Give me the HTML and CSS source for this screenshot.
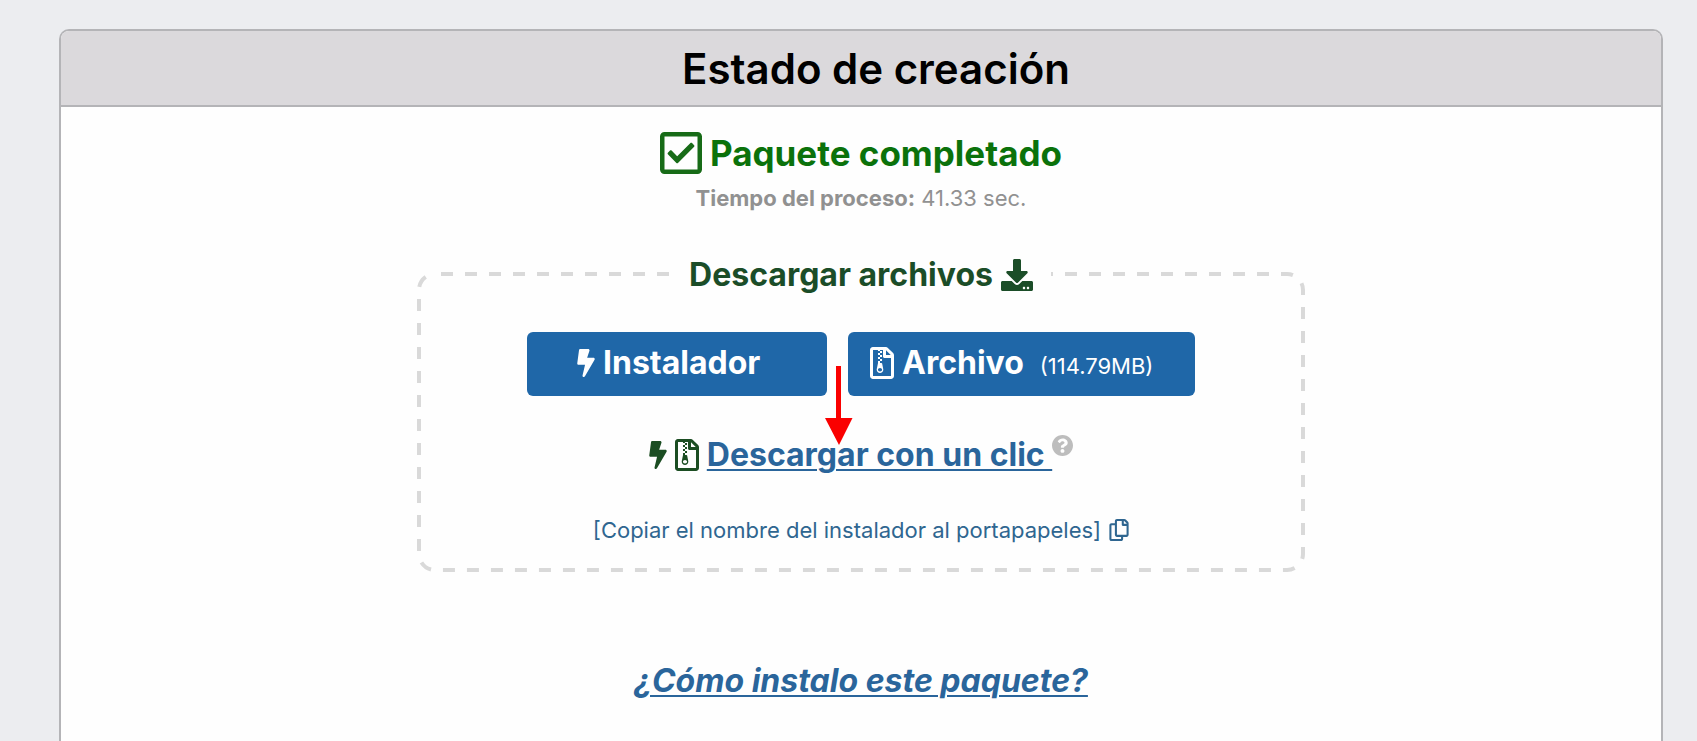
FILE: index.html
```html
<!DOCTYPE html>
<html lang="es">
<head>
<meta charset="utf-8">
<title>Estado de creación</title>
<link rel="stylesheet" href="styles.css">
</head>
<body>
<svg class="sprite" aria-hidden="true">
  <symbol id="bolt" viewBox="0 0 320 512"><path d="M296 160H180.600l42.600-129.800C227.200 15 215.700 0 200 0H56C44 0 33.800 8.900 32.200 20.800l-32 240C-1.700 275.200 9.500 288 24 288h118.700L96.600 482.500c-3.600 15.200 8 29.500 23.300 29.500 8.400 0 16.400-4.400 20.800-12l176-304c9.300-15.900-2.200-36-20.700-36z"/></symbol>
  <symbol id="zip" viewBox="0 0 384 512"><path d="M128.300 160v32h32v-32zm64-96h-32v32h32zm-64 32v32h32V96zm64 32h-32v32h32zm177.600-30.100L286 14C277 5 264.800-.1 252.100-.1H48C21.500 0 0 21.500 0 48v416c0 26.500 21.500 48 48 48h288c26.500 0 48-21.500 48-48V131.900c0-12.700-5.100-25-14.100-34zM256 51.900l76.100 76.100H256zM336 464H48V48h79.700v16h32V48H208v104c0 13.300 10.700 24 24 24h104zM194.200 265.700c-1.100-5.600-6-9.700-11.800-9.700h-22.100v-32h-32v32l-19.700 97.100C102 385.600 126.800 416 160 416c33.100 0 57.900-30.200 51.500-62.600zm-33.900 124.400c-17.900 0-32.400-12.100-32.400-27s14.500-27 32.400-27 32.400 12.100 32.400 27-14.500 27-32.400 27zm32-198.100h-32v32h32z"/></symbol>
</svg>
<main class="panel">
  <header class="panel-head"><h1 class="title">Estado de creación</h1></header>
  <div class="panel-body">
    <h2 class="done">
      <svg class="icon-check" viewBox="0 32 448 448" aria-hidden="true"><path d="M400 32H48C21.490 32 0 53.490 0 80v352c0 26.510 21.490 48 48 48h352c26.510 0 48-21.490 48-48V80c0-26.510-21.490-48-48-48zm0 400H48V80h352v352zm-35.864-241.724L191.547 361.480c-4.705 4.667-12.303 4.637-16.970-.068l-90.781-91.516c-4.667-4.705-4.637-12.303.069-16.971l22.719-22.536c4.705-4.667 12.303-4.637 16.970.069l59.792 60.277 141.352-140.216c4.705-4.667 12.303-4.637 16.970.068l22.536 22.718c4.667 4.706 4.637 12.304-.068 16.971z"/></svg>
      Paquete completado
    </h2>
    <p class="time"><strong>Tiempo del proceso:</strong> 41.33 sec.</p>

    <section class="downloads">
      <svg class="outline" aria-hidden="true"><rect class="outline-rect" rx="16"/></svg>
      <h3 class="legend">
        Descargar archivos
        <svg class="icon-download" viewBox="0 0 512 512" aria-hidden="true"><path d="M216 0h80c13.300 0 24 10.700 24 24v168h87.700c17.800 0 26.700 21.500 14.100 34.100L269.700 378.300c-7.500 7.500-19.800 7.500-27.300 0L90.100 226.100c-12.600-12.600-3.700-34.100 14.100-34.100H192V24c0-13.300 10.700-24 24-24zm296 376v112c0 13.300-10.700 24-24 24H24c-13.300 0-24-10.700-24-24V376c0-13.300 10.700-24 24-24h146.700l49 49c20.100 20.100 52.500 20.100 72.600 0l49-49H488c13.300 0 24 10.700 24 24zm-124 88c0-11-9-20-20-20s-20 9-20 20 9 20 20 20 20-9 20-20zm64 0c0-11-9-20-20-20s-20 9-20 20 9 20 20 20 20-9 20-20z"/></svg>
      </h3>
      <div class="buttons">
        <button type="button" class="btn btn-installer"><svg class="icon-bolt" aria-hidden="true"><use href="#bolt"/></svg>Instalador</button>
        <button type="button" class="btn btn-archive"><svg class="icon-zip" aria-hidden="true"><use href="#zip"/></svg>Archivo<span class="size">(114.79MB)</span></button>
      </div>
      <div class="one-click">
        <svg class="icon-bolt" aria-hidden="true"><use href="#bolt"/></svg>
        <svg class="icon-zip" aria-hidden="true"><use href="#zip"/></svg>
        <a class="one-click-link" href="#descargar">Descargar con un clic </a>
        <svg class="icon-help" viewBox="8 8 496 496" role="img" aria-label="Ayuda"><path d="M504 256c0 136.997-111.043 248-248 248S8 392.997 8 256C8 119.083 119.043 8 256 8s248 111.083 248 248zM262.655 90c-54.497 0-89.255 22.957-116.549 63.758-3.536 5.286-2.353 12.415 2.715 16.258l34.699 26.310c5.205 3.947 12.621 3.008 16.665-2.122 17.864-22.658 30.113-35.797 57.303-35.797 20.429 0 45.698 13.148 45.698 32.958 0 14.976-12.363 22.667-32.534 33.976C247.128 238.528 216 254.941 216 296v4c0 6.627 5.373 12 12 12h56c6.627 0 12-5.373 12-12v-1.333c0-28.462 83.186-29.647 83.186-106.667 0-58.002-60.165-102-116.531-102zM256 338c-25.365 0-46 20.635-46 46 0 25.364 20.635 46 46 46s46-20.636 46-46c0-25.365-20.635-46-46-46z"/></svg>
      </div>
      <a class="copy" href="#copiar">[Copiar el nombre del instalador al portapapeles]
        <svg class="icon-copy" viewBox="0 0 448 512" aria-hidden="true"><path d="M433.941 65.941l-51.882-51.882A48 48 0 0 0 348.118 0H176c-26.510 0-48 21.490-48 48v48H48c-26.510 0-48 21.490-48 48v320c0 26.510 21.490 48 48 48h224c26.510 0 48-21.490 48-48v-48h80c26.510 0 48-21.490 48-48V99.882a48 48 0 0 0-14.059-33.941zM266 464H54a6 6 0 0 1-6-6V150a6 6 0 0 1 6-6h74v224c0 26.510 21.490 48 48 48h96v42a6 6 0 0 1-6 6zm128-96H182a6 6 0 0 1-6-6V54a6 6 0 0 1 6-6h106v88c0 13.255 10.745 24 24 24h88v202a6 6 0 0 1-6 6zm6-256h-64V48h9.632c1.591 0 3.117.632 4.243 1.757l48.368 48.368a6 6 0 0 1 1.757 4.243V112z"/></svg></a>
      <svg class="arrow" viewBox="0 0 28 80" aria-hidden="true"><path d="M11 0h5v52h11.500L14 79 0 52h11z"/></svg>
    </section>

    <a class="howto" href="#instalar">¿Cómo instalo este paquete?</a>
  </div>
</main>
</body>
</html>
```

FILE: styles.css
```css
* { box-sizing: border-box; }

body {
  margin: 0;
  min-height: 100vh;
  display: flex;
  flex-direction: column;
  padding: 29px 34px 0 59px;
  background: #ecedf0;
  font-family: Inter, "Liberation Sans", sans-serif;
  font-size: 22px;
}

h1, h2, h3, p { margin: 0; }
svg { fill: currentColor; flex: none; }
.sprite { position: absolute; width: 0; height: 0; }

.panel {
  flex: 1;
  display: flex;
  flex-direction: column;
  border: 2px solid #b4b4b7;
  border-bottom: 0;
  border-radius: 10px 10px 0 0;
  background: #fefefe;
  overflow: hidden;
}

.panel-head {
  padding: 12px 0 10px 30px;
  border-bottom: 2px solid #b4b4b7;
  background: #dbd9dc;
  text-align: center;
}

.title {
  font-size: 42px;
  font-weight: 600;
  line-height: 52px;
  color: #000;
}

.panel-body {
  display: flex;
  flex-direction: column;
  align-items: center;
  padding: 24px 20px 32px;
}

.done {
  display: flex;
  align-items: center;
  gap: 8px;
  font-size: 35px;
  font-weight: 700;
  line-height: 44px;
  color: #0b720b;
}
.icon-check { width: 42px; height: 42px; color: #176b17; }

.time {
  padding-top: 9px;
  line-height: 28px;
  color: #919191;
}
.time strong { font-weight: 700; }

.downloads {
  position: relative;
  width: 100%;
  max-width: 888px;
  margin-top: 60px;
  padding-bottom: 28px;
  display: flex;
  flex-direction: column;
  align-items: center;
}

.outline {
  position: absolute;
  inset: 0;
  width: 100%;
  height: 100%;
}
.outline-rect {
  x: 2px;
  y: 2px;
  width: calc(100% - 4px);
  height: calc(100% - 4px);
  fill: none;
  stroke: #d9d9d9;
  stroke-width: 4px;
  stroke-dasharray: 12 12;
  stroke-dashoffset: -6;
}

.legend {
  position: relative;
  display: flex;
  align-items: center;
  gap: 8px;
  margin-top: -17px;
  padding: 0 18px;
  background: #fefefe;
  font-size: 32px;
  font-weight: 700;
  line-height: 40px;
  color: #1b4d28;
}
.icon-download { width: 32px; height: 32px; }

.buttons {
  display: flex;
  gap: 21px;
  margin-top: 37px;
}

.btn {
  display: flex;
  align-items: center;
  gap: 8px;
  height: 64px;
  border: 0;
  border-radius: 6px;
  background: #1f67a8;
  color: #fff;
  font: 700 32px/40px Inter, "Liberation Sans", sans-serif;
}
.btn-installer { width: 300px; padding: 0 50px 2px; }
.btn-archive { width: 347px; padding: 0 22px 2px; }
.size {
  padding: 6px 0 0 8px;
  font-size: 22px;
  font-weight: 400;
}

.icon-bolt { width: 18px; height: 28px; }
.icon-zip { width: 24px; height: 32px; }

.one-click {
  display: flex;
  align-items: center;
  gap: 8px;
  margin-top: 39px;
  color: #1b4d22;
}
.one-click-link {
  font-size: 32px;
  font-weight: 700;
  line-height: 40px;
  white-space: pre;
  text-underline-offset: 3px;
}
.icon-help {
  align-self: flex-start;
  width: 21px;
  height: 21px;
  margin-left: -8px;
  color: #bdbdbd;
}

a {
  color: #2a659b;
  text-decoration-thickness: 2px;
}

.copy {
  display: flex;
  align-items: center;
  gap: 8px;
  margin-top: 41px;
  line-height: 28px;
  text-decoration: none;
  color: #2f6690;
}
.icon-copy { width: 20px; height: 22px; }

.arrow {
  position: absolute;
  left: calc(50% - 36px);
  top: 94px;
  width: 28px;
  height: 80px;
  fill: #fa0000;
}

.howto {
  margin-top: 89px;
  font-size: 32px;
  font-style: italic;
  font-weight: 700;
  line-height: 40px;
  text-underline-offset: 3px;
}
```
